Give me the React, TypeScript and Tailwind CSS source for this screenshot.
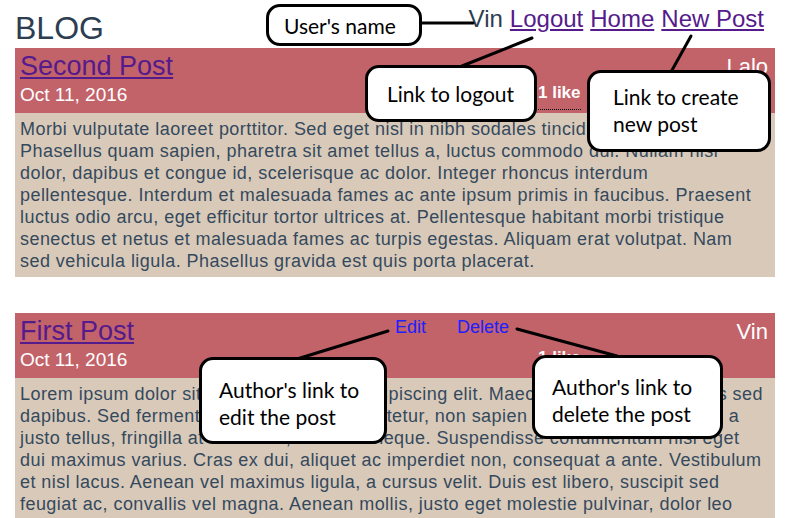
import React from 'react';

type Post = {
  title: string;
  date: string;
  author: string;
  likes: string;
  mine: boolean;
  lines: string[];
};

const posts: Post[] = [
  {
    title: 'Second Post',
    date: 'Oct 11, 2016',
    author: 'Lalo',
    likes: '1 like',
    mine: false,
    lines: [
      'Morbi vulputate laoreet porttitor. Sed eget nisl in nibh sodales tincidunt. Donec vel',
      'Phasellus quam sapien, pharetra sit amet tellus a, luctus commodo dui. Nullam nisl',
      'dolor, dapibus et congue id, scelerisque ac dolor. Integer rhoncus interdum',
      'pellentesque. Interdum et malesuada fames ac ante ipsum primis in faucibus. Praesent',
      'luctus odio arcu, eget efficitur tortor ultrices at. Pellentesque habitant morbi tristique',
      'senectus et netus et malesuada fames ac turpis egestas. Aliquam erat volutpat. Nam',
      'sed vehicula ligula. Phasellus gravida est quis porta placerat.',
    ],
  },
  {
    title: 'First Post',
    date: 'Oct 11, 2016',
    author: 'Vin',
    likes: '1 like',
    mine: true,
    lines: [
      'Lorem ipsum dolor sit amet, consectetur adipiscing elit. Maecenas quis mattis lectus sed',
      'dapibus. Sed fermentum lacus vitae consectetur, non sapien lobortis tempus est mi, a',
      'justo tellus, fringilla at ultrices a, mattis in neque. Suspendisse condimentum nisl eget',
      'dui maximus varius. Cras ex dui, aliquet ac imperdiet non, consequat a ante. Vestibulum',
      'et nisl lacus. Aenean vel maximus ligula, a cursus velit. Duis est libero, suscipit sed',
      'feugiat ac, convallis vel magna. Aenean mollis, justo eget molestie pulvinar, dolor leo',
      'vitae tempor fermentum, nulla magna dictum nibh.',
    ],
  },
];

const PostCard = ({ post }: { post: Post }) => (
  <div className="mb-[36px]">
    <div className="flex h-[65px] bg-[#c2636a] pl-[5px] pr-[7px]">
      <div className="flex w-[375px] flex-col pt-[3px]">
        <a href="#" className="text-[27px] leading-[30px] text-[#551a8b] underline">
          {post.title}
        </a>
        <div className="mt-[3px] text-[19px] leading-[22px] text-white">{post.date}</div>
      </div>
      <div className="flex flex-1 flex-col">
        <div className="flex h-[35px] gap-[31px] pt-[4px] text-[18px] leading-[21px]">
          {post.mine && (
            <>
              <a href="#" className="text-[#2020ff]">Edit</a>
              <a href="#" className="text-[#2020ff]">Delete</a>
            </>
          )}
        </div>
        <div className="ml-[143px] self-start border-b border-dotted border-black pb-[6px] text-[17px] font-bold leading-[20px] text-white">
          {post.likes}
        </div>
      </div>
      <div className="pt-[6px] text-[22px] leading-[26px] text-white">{post.author}</div>
    </div>
    <div className="bg-[#d9c9b8] p-[5px] text-[18px] leading-[22px] tracking-[0.45px] text-[#34495e]">
      {post.lines.map((l, i) => (
        <div key={i} className="whitespace-nowrap">
          {l}
        </div>
      ))}
    </div>
  </div>
);

const Note = ({ className, children }: { className: string; children: React.ReactNode }) => (
  <div
    className={`absolute rounded-[14px] border-[3px] border-black bg-white font-['Lato',sans-serif] text-[21px] leading-[27px] text-black ${className}`}
  >
    {children}
  </div>
);

export default function App() {
  return (
    <div className="relative h-[518px] w-[795px] overflow-hidden bg-white font-['Liberation_Sans',Arial,sans-serif]">
      <div className="flex h-[48px] items-start justify-between pl-[15px] pr-[31px]">
        <h1 className="pt-[10px] text-[32px] leading-[36px] text-[#2c3e50]">BLOG</h1>
        <div className="flex gap-[7px] pt-[5px] text-[24px] leading-[28px] text-[#2c3e50]">
          <span>Vin</span>
          <a href="#" className="text-[#551a8b] underline">Logout</a>
          <a href="#" className="text-[#551a8b] underline">Home</a>
          <a href="#" className="text-[#551a8b] underline">New Post</a>
        </div>
      </div>

      <div className="pl-[15px] pr-[20px]">
        {posts.map((p) => (
          <PostCard key={p.title} post={p} />
        ))}
      </div>

      {/* annotations */}
      <svg className="pointer-events-none absolute inset-0" width="795" height="518">
        <g stroke="black" strokeWidth="3" strokeLinecap="round">
          <line x1="421" y1="23" x2="473" y2="23" />
          <line x1="532" y1="38" x2="462" y2="66" />
          <line x1="691" y1="36" x2="671" y2="72" />
          <line x1="388" y1="331" x2="297" y2="359" />
          <line x1="517" y1="329" x2="617" y2="356" />
        </g>
      </svg>

      <Note className="left-[266px] top-[4px] flex h-[42px] w-[156px] items-center pl-[15px]">User's name</Note>
      <Note className="left-[365px] top-[65px] flex h-[57px] w-[172px] items-center pl-[19px]">Link to logout</Note>
      <Note className="left-[587px] top-[70px] h-[82px] w-[184px] pl-[23px] pt-[10px]">
        Link to create
        <br />
        new post
      </Note>
      <Note className="left-[199px] top-[357px] h-[87px] w-[188px] pl-[17px] pt-[16px]">
        Author's link to
        <br />
        edit the post
      </Note>
      <Note className="left-[532px] top-[355px] h-[84px] w-[191px] pl-[17px] pt-[15px]">
        Author's link to
        <br />
        delete the post
      </Note>
    </div>
  );
}
